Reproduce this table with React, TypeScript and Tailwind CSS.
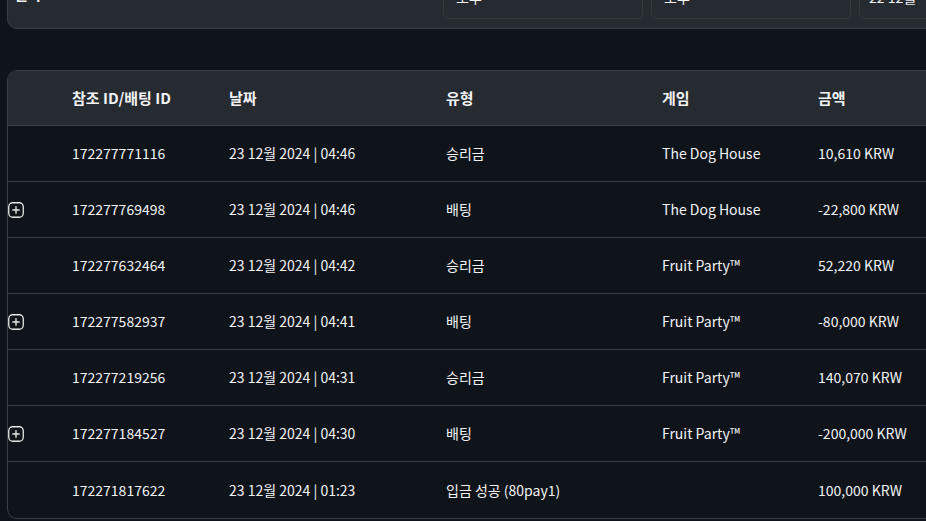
import React from "react";

type Row = { id: string; date: string; time: string; type: string; game: string; amount: string; plus?: boolean };

const rows: Row[] = [
  { id: "172277771116", date: "23 12월 2024", time: "04:46", type: "승리금", game: "The Dog House", amount: "10,610 KRW" },
  { id: "172277769498", date: "23 12월 2024", time: "04:46", type: "배팅", game: "The Dog House", amount: "-22,800 KRW", plus: true },
  { id: "172277632464", date: "23 12월 2024", time: "04:42", type: "승리금", game: "Fruit Party™", amount: "52,220 KRW" },
  { id: "172277582937", date: "23 12월 2024", time: "04:41", type: "배팅", game: "Fruit Party™", amount: "-80,000 KRW", plus: true },
  { id: "172277219256", date: "23 12월 2024", time: "04:31", type: "승리금", game: "Fruit Party™", amount: "140,070 KRW" },
  { id: "172277184527", date: "23 12월 2024", time: "04:30", type: "배팅", game: "Fruit Party™", amount: "-200,000 KRW", plus: true },
  { id: "172271817622", date: "23 12월 2024", time: "01:23", type: "입금 성공 (80pay1)", game: "", amount: "100,000 KRW" },
];

const cols = "grid grid-cols-[64px_157px_217px_216px_156px_1fr]";

function PlusIcon() {
  return (
    <svg width="16" height="16" viewBox="0 0 16 16" fill="none">
      <rect x="0.75" y="0.75" width="14.5" height="14.5" rx="4" stroke="#e8e8e8" strokeWidth="1.3" />
      <path d="M8 4.8v6.4M4.8 8h6.4" stroke="#e8e8e8" strokeWidth="1.4" strokeLinecap="round" />
    </svg>
  );
}

export default function App() {
  return (
    <div
      className="w-[926px] h-[521px] overflow-hidden bg-[#0f141a] text-[#f2f3f5] text-[14px]"
      style={{ fontFamily: '"Noto Sans CJK KR", "Noto Sans", sans-serif' }}
    >
      <div className="pl-[7px]">
        {/* top filter panel (scrolled) */}
        <div className="mt-[-41px] h-[70px] w-[1000px] rounded-[10px] bg-[#262a31] border border-[#3a3d43] flex items-start">
          <div className="w-[435px] shrink-0 pl-[6px] pt-[24px] font-bold text-[15px] leading-[20px]">일자</div>
          <div className="flex gap-[8px] pt-[18px] shrink-0">
            <div className="w-[200px] h-[41px] rounded-[6px] border border-[#35383d] pl-[12px] pt-[8px] leading-[20px]">오후</div>
            <div className="w-[200px] h-[41px] rounded-[6px] border border-[#35383d] pl-[12px] pt-[8px] leading-[20px]">오후</div>
            <div className="w-[200px] h-[41px] rounded-[6px] border border-[#35383d] pl-[9px] pt-[8px] leading-[20px]">22 12월</div>
          </div>
        </div>

        {/* table */}
        <div className="mt-[41px] w-[960px] rounded-[10px] border border-[#3a3d43] overflow-hidden">
          <div className={`${cols} h-[55px] items-center bg-[#262a31] font-bold text-[15px] border-b border-[#3a3d43]`}>
            <div />
            <div>참조 ID/배팅 ID</div>
            <div>날짜</div>
            <div>유형</div>
            <div>게임</div>
            <div>금액</div>
          </div>
          {rows.map((r, i) => (
            <div
              key={r.id}
              className={`${cols} h-[56px] items-center ${i < rows.length - 1 ? "border-b border-[#3a3d43]" : ""}`}
            >
              <div className="flex items-center">{r.plus ? <PlusIcon /> : null}</div>
              <div>{r.id}</div>
              <div>
                {r.date} | {r.time}
              </div>
              <div>{r.type}</div>
              <div>{r.game}</div>
              <div>{r.amount}</div>
            </div>
          ))}
        </div>
      </div>
    </div>
  );
}
